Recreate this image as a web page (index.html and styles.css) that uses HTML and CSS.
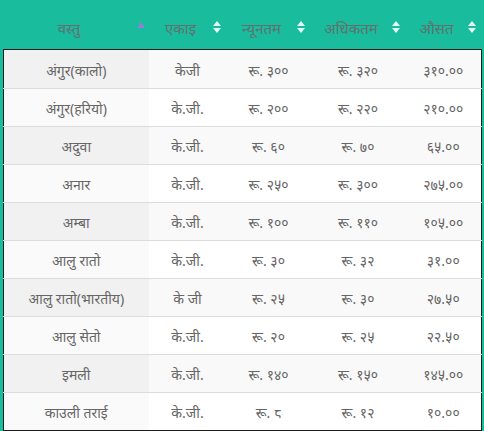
FILE: index.html
```
<!DOCTYPE html>
<html lang="ne">
<head>
<meta charset="utf-8">
<link rel="stylesheet" href="styles.css">
</head>
<body>
<table class="prices">
  <colgroup>
    <col class="c1"><col class="c2"><col class="c3"><col class="c4"><col class="c5">
  </colgroup>
  <thead>
    <tr>
      <th><span class="lbl">वस्तु</span><span class="sort asc"></span></th>
      <th><span class="lbl">एकाइ</span><span class="sort both"></span></th>
      <th><span class="lbl">न्यूनतम</span><span class="sort both"></span></th>
      <th><span class="lbl">अधिकतम</span><span class="sort both"></span></th>
      <th><span class="lbl">औसत</span><span class="sort both"></span></th>
    </tr>
  </thead>
  <tbody>
    <tr><td>अंगुर(कालो)</td><td>केजी</td><td>रू. ३००</td><td>रू. ३२०</td><td>३१०.००</td></tr>
    <tr><td>अंगुर(हरियो)</td><td>के.जी.</td><td>रू. २००</td><td>रू. २२०</td><td>२१०.००</td></tr>
    <tr><td>अदुवा</td><td>के.जी.</td><td>रू. ६०</td><td>रू. ७०</td><td>६५.००</td></tr>
    <tr><td>अनार</td><td>के.जी.</td><td>रू. २५०</td><td>रू. ३००</td><td>२७५.००</td></tr>
    <tr><td>अम्बा</td><td>के.जी.</td><td>रू. १००</td><td>रू. ११०</td><td>१०५.००</td></tr>
    <tr><td>आलु रातो</td><td>के.जी.</td><td>रू. ३०</td><td>रू. ३२</td><td>३१.००</td></tr>
    <tr><td>आलु रातो(भारतीय)</td><td>के जी</td><td>रू. २५</td><td>रू. ३०</td><td>२७.५०</td></tr>
    <tr><td>आलु सेतो</td><td>के.जी.</td><td>रू. २०</td><td>रू. २५</td><td>२२.५०</td></tr>
    <tr><td>इमली</td><td>के.जी.</td><td>रू. १४०</td><td>रू. १५०</td><td>१४५.००</td></tr>
    <tr><td>काउली तराई</td><td>के.जी.</td><td>रू. ८</td><td>रू. १२</td><td>१०.००</td></tr>
  </tbody>
</table>
</body>
</html>
```
FILE: styles.css
```
html, body {
  margin: 0;
  padding: 0;
  background: #19bc9c;
}
body {
  padding: 0 3px;
  font-family: "Noto Sans", "Noto Sans Devanagari", "Lohit Devanagari", sans-serif;
  font-size: 14px;
  color: #666;
}
.prices {
  width: 478px;
  border-collapse: collapse;
  table-layout: fixed;
}
.c1 { width: 145px; }
.c2 { width: 78px; }
.c3 { width: 84px; }
.c4 { width: 95px; }
.c5 { width: 76px; }

.prices thead th {
  height: 49px;
  padding: 7px 22px 0 8px;
  box-sizing: border-box;
  font-weight: normal;
  color: #627170;
  text-align: center;
  position: relative;
  font-size: 15px;
}
.sort {
  position: absolute;
  right: 6px;
  top: 50%;
  width: 8px;
  height: 14px;
  margin-top: -3px;
}
.sort.both::before,
.sort.both::after {
  content: "";
  position: absolute;
  left: 0;
  border-left: 4px solid transparent;
  border-right: 4px solid transparent;
}
.sort.both::before {
  top: 0;
  border-bottom: 5px solid #e6f7f3;
}
.sort.both::after {
  top: 7px;
  border-top: 5px solid #e6f7f3;
}
.sort.asc { right: 4px; }
.sort.asc::before {
  content: "";
  position: absolute;
  left: 0;
  top: 1px;
  border-left: 4px solid transparent;
  border-right: 4px solid transparent;
  border-bottom: 6px solid #8b84d6;
}

.prices tbody {
  border: 1px solid #1c1c1c;
}
.prices tbody td {
  padding: 3px 6px 0;
  line-height: 34px;
  text-align: center;
  border-top: 1px solid #dcdcdc;
  background: #fff;
  white-space: nowrap;
}
.prices tbody tr:first-child td { border-top: none; padding-top: 4px; }
.prices tbody tr:nth-child(odd) td { background: #f9f9f9; }
.prices tbody tr td:first-child { background: #fafafa; }
.prices tbody tr:nth-child(odd) td:first-child { background: #f1f1f1; }
```
